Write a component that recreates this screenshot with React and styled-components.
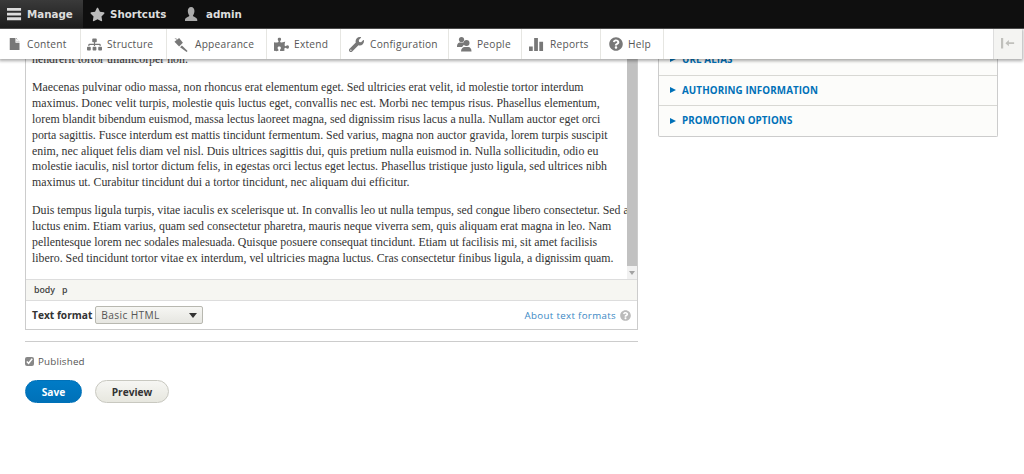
import React from "react";
import styled, { createGlobalStyle } from "styled-components";
import { FaStar, FaSitemap, FaPuzzlePiece, FaWrench, FaQuestionCircle } from "react-icons/fa";

const Global = createGlobalStyle`
  html, body { margin: 0; padding: 0; background: #fff; }
  body { font-family: "Open Sans", "Liberation Sans", sans-serif; }
  * { box-sizing: border-box; }
`;

const Root = styled.div`
  width: 1024px;
  height: 474px;
  overflow: hidden;
  display: flex;
  flex-direction: column;
`;
const Header = styled.header`
  position: relative;
  z-index: 10;
  flex: none;
`;
const TopBar = styled.div`
  height: 29px;
  background: #0f0f0f;
  display: flex;
  border-bottom: 1px solid #555;
`;
const TopTab = styled.div`
  display: flex;
  align-items: center;
  gap: ${(p) => p.$gap}px;
  width: ${(p) => p.$w}px;
  padding-left: ${(p) => p.$pl}px;
  color: #ddd;
  font: 700 10.3px "DejaVu Sans", sans-serif;
  background: ${(p) => (p.$active ? "linear-gradient(#3a3a3a, #1c1c1c)" : "transparent")};
`;
const Tray = styled.nav`
  height: 30px;
  margin-right: 2px;
  background: #fff;
  display: flex;
  box-shadow: 0 1px 3px 1px rgba(0, 0, 0, 0.33);
`;
const TrayItem = styled.div`
  width: ${(p) => p.$w}px;
  flex: none;
  display: flex;
  align-items: center;
  gap: ${(p) => p.$gap}px;
  padding-left: ${(p) => p.$pl}px;
  color: #565656;
  font-size: 10.2px;
  letter-spacing: 0.22px;
  border-right: 1px solid #e6e6e2;
  svg { flex: none; color: #787878; }
`;
const TraySpacer = styled.div`
  flex: 1;
`;
const Toggle = styled.div`
  width: 29px;
  flex: none;
  background: #f4f4f2;
  border-left: 1px solid #ddd;
  display: flex;
  align-items: center;
  justify-content: center;
`;

const Page = styled.main`
  flex: 1;
  min-height: 0;
  margin-top: -15px;
  padding-left: 25px;
  display: grid;
  grid-template-columns: 613px 340px;
  column-gap: 20px;
  align-items: start;
`;
const Column = styled.div`
  display: flex;
  flex-direction: column;
`;
const Editor = styled.div`
  border: 1px solid #ccc;
  border-top: 0;
`;
const EditArea = styled.div`
  height: 236px;
  display: flex;
  overflow: hidden;
  border-bottom: 1px solid #ddd;
`;
const Body = styled.div`
  flex: 1;
  min-width: 0;
  padding: 0 0 0 6px;
  color: #333;
  font-family: "Liberation Serif", serif;
  font-size: 11.85px;
  line-height: 15.9px;
  white-space: nowrap;
`;
const Para = styled.p`
  margin: ${(p) => p.$top || 0}px 0 12px;
`;
const Scrollbar = styled.div`
  width: 10px;
  flex: none;
  display: flex;
  flex-direction: column;
  background: #f1f1f1;
`;
const Thumb = styled.div`
  flex: 1;
  background: #c1c1c1;
`;
const ArrowCell = styled.div`
  height: 13px;
  display: flex;
  align-items: center;
  justify-content: center;
  color: #a3a3a3;
  &::after {
    content: "";
    border: 3px solid transparent;
    border-top: 4px solid currentColor;
    border-bottom: 0;
  }
`;
const StatusBar = styled.div`
  height: 21px;
  background: #f6f6f2;
  border-bottom: 1px solid #ddd;
  padding-left: 8px;
  display: flex;
  align-items: center;
  gap: 7px;
  color: #444;
  font-size: 8.8px;
  font-weight: 600;
`;
const FormatRow = styled.div`
  height: 28px;
  padding: 0 6px;
  display: flex;
  align-items: center;
  color: #333;
  font-size: 10.2px;
`;
const FormatLabel = styled.span`
  font-weight: 700;
  margin-right: 3px;
`;
const Select = styled.div`
  width: 108px;
  height: 18px;
  border: 1px solid #b8b8b0;
  border-radius: 2px;
  background: linear-gradient(#f6f6f3, #e6e6e1);
  display: flex;
  align-items: center;
  justify-content: space-between;
  padding: 0 5px;
  color: #555;
  letter-spacing: 0.35px;
  &::after {
    content: "";
    border: 4px solid transparent;
    border-top: 5px solid #333;
    border-bottom: 0;
  }
`;
const AboutLink = styled.div`
  margin-left: auto;
  display: flex;
  align-items: center;
  gap: 4px;
  color: #3a87c4;
  font-size: 9.7px;
  letter-spacing: 0.35px;
  svg { color: #bbb; }
`;
const Rule = styled.hr`
  margin: 11px 0 0;
  border: 0;
  border-top: 1px solid #ccc;
`;
const Check = styled.label`
  margin-top: 12px;
  display: flex;
  align-items: center;
  gap: 4px;
  height: 14px;
  color: #555;
  font-size: 9.8px;
  letter-spacing: 0.2px;
  input { margin: 0; width: 9px; height: 9px; accent-color: #888; }
`;
const Actions = styled.div`
  margin-top: 12px;
  display: flex;
  gap: 13px;
`;
const Button = styled.div`
  height: 23px;
  border-radius: 12px;
  width: ${(p) => p.$w}px;
  display: flex;
  align-items: center;
  justify-content: center;
  font-size: 10.2px;
  font-weight: 700;
  color: ${(p) => (p.$primary ? "#fff" : "#333")};
  background: ${(p) => (p.$primary ? "linear-gradient(#007bc6, #0071b8)" : "linear-gradient(#f6f6f3, #e7e7df)")};
  border: 1px solid ${(p) => (p.$primary ? "#0071b8" : "#c8c8c0")};
`;
const Panel = styled.aside`
  border: 1px solid #ccc;
  border-top: 0;
  border-radius: 0 0 2px 2px;
  background: #fcfcfa;
`;
const PanelRow = styled.div`
  height: 30.5px;
  padding-left: 11px;
  display: flex;
  align-items: center;
  gap: 6px;
  color: #0071b8;
  font-size: 9.8px;
  font-weight: 700;
  letter-spacing: 0.1px;
  text-transform: uppercase;
  & + & { border-top: 1px solid #d8d8d4; }
  &::before {
    content: "";
    border: 3px solid transparent;
    border-left: 6px solid #0071b8;
    border-right: 0;
  }
`;

const Ico = ({ children, w = 16, h = 16 }) => (
  <svg width={w} height={h} viewBox="0 0 16 16" fill="currentColor">{children}</svg>
);

const menu = [
  { t: "Content", w: 81, pl: 9, gap: 6, i: <Ico w={12} h={14}><path d="M1 0h8l5 5v11H1zM9.5 0v5H14z" /><path d="M9 0v6h6" fill="none" stroke="#fff" strokeWidth="1" /></Ico> },
  { t: "Structure", w: 86, pl: 6, gap: 5, i: <FaSitemap size={15} /> },
  { t: "Appearance", w: 100, pl: 6, gap: 6, i: <Ico w={16} h={15}><path d="M1 5l5-4 4 5-4 4z" /><path d="M7 11l2-2 6 6-1 1z" /><path d="M3 3L1 1l3 1z" /></Ico> },
  { t: "Extend", w: 74, pl: 7, gap: 5, i: <FaPuzzlePiece size={15} /> },
  { t: "Configuration", w: 108, pl: 8, gap: 6, i: <FaWrench size={15} /> },
  { t: "People", w: 73, pl: 7, gap: 5, i: <Ico w={16} h={16}><circle cx="5.5" cy="3.5" r="2.6" /><path d="M1 10c0-2.500 2-3.500 2.500-3.500h4c1 0 1.500 1 1.500 1L6 11H1z" /><circle cx="10.500" cy="7" r="3" /><path d="M5 15.500c0-3 2-4.500 3.500-4.500h4c1.500 0 3 1.500 3 4.500z" /></Ico> },
  { t: "Reports", w: 79, pl: 7, gap: 6, i: <Ico w={15} h={15}><path d="M0 10h4v5H0zM5.500 1h4v14h-4zM11 5h4v10h-4z" /></Ico> },
  { t: "Help", w: 63, pl: 8, gap: 5, i: <FaQuestionCircle size={14} /> },
];

const para1 = [
  "Maecenas pulvinar odio massa, non rhoncus erat elementum eget. Sed ultricies erat velit, id molestie tortor interdum",
  "maximus. Donec velit turpis, molestie quis luctus eget, convallis nec est. Morbi nec tempus risus. Phasellus elementum,",
  "lorem blandit bibendum euismod, massa lectus laoreet magna, sed dignissim risus lacus a nulla. Nullam auctor eget orci",
  "porta sagittis. Fusce interdum est mattis tincidunt fermentum. Sed varius, magna non auctor gravida, lorem turpis suscipit",
  "enim, nec aliquet felis diam vel nisl. Duis ultrices sagittis dui, quis pretium nulla euismod in. Nulla sollicitudin, odio eu",
  "molestie iaculis, nisl tortor dictum felis, in egestas orci lectus eget lectus. Phasellus tristique justo ligula, sed ultrices nibh",
  "maximus ut. Curabitur tincidunt dui a tortor tincidunt, nec aliquam dui efficitur.",
];
const para2 = [
  "Duis tempus ligula turpis, vitae iaculis ex scelerisque ut. In convallis leo ut nulla tempus, sed congue libero consectetur. Sed a",
  "luctus enim. Etiam varius, quam sed consectetur pharetra, mauris neque viverra sem, quis aliquam erat magna in leo. Nam",
  "pellentesque lorem nec sodales malesuada. Quisque posuere consequat tincidunt. Etiam ut facilisis mi, sit amet facilisis",
  "libero. Sed tincidunt tortor vitae ex interdum, vel ultricies magna luctus. Cras consectetur finibus ligula, a dignissim quam.",
];
const lines = (arr) => arr.map((l, i) => <React.Fragment key={i}>{l}{i < arr.length - 1 && <br />}</React.Fragment>);

export default function App() {
  return (
    <Root>
      <Global />
      <Header>
        <TopBar>
          <TopTab $w={83} $pl={7} $gap={5} $active>
            <Ico w={15} h={15}><path d="M0 1h15v3H0zM0 6h15v3H0zM0 11h15v3H0z" fill="#ddd" /></Ico>
            Manage
          </TopTab>
          <TopTab $w={102} $pl={7} $gap={5}><FaStar size={15} color="#bbb" />Shortcuts</TopTab>
          <TopTab $w={100} $pl={0} $gap={7}>
            <Ico w={14} h={16}><path d="M7 0c2.500 0 3.800 2 3.800 4.500S9.500 9 9 10c0 1 5 2 5 4.500V16H0v-1.500C0 12 5 11 5 10c-.5-1-1.800-3-1.800-5.500S4.500 0 7 0z" fill="#aaa" /></Ico>
            admin
          </TopTab>
        </TopBar>
        <Tray>
          {menu.map((m) => (
            <TrayItem key={m.t} $w={m.w} $pl={m.pl} $gap={m.gap}>{m.i}{m.t}</TrayItem>
          ))}
          <TraySpacer />
          <Toggle>
            <Ico w={16} h={14}><path d="M0 1h2.500v12H0zM5 7l4-3.500V6h6v2H9v2.500z" fill="#c0c0bc" /></Ico>
          </Toggle>
        </Tray>
      </Header>
      <Page>
        <Column>
          <Editor>
            <EditArea>
              <Body>
                <Para $top={8}>hendrerit tortor ullamcorper non.</Para>
                <Para>{lines(para1)}</Para>
                <Para>{lines(para2)}</Para>
              </Body>
              <Scrollbar><Thumb /><ArrowCell /></Scrollbar>
            </EditArea>
            <StatusBar><span>body</span><span>p</span></StatusBar>
            <FormatRow>
              <FormatLabel>Text format</FormatLabel>
              <Select>Basic HTML</Select>
              <AboutLink>About text formats <FaQuestionCircle size={11} /></AboutLink>
            </FormatRow>
          </Editor>
          <Rule />
          <Check><input type="checkbox" defaultChecked readOnly /> Published</Check>
          <Actions>
            <Button $primary $w={57}>Save</Button>
            <Button $w={74}>Preview</Button>
          </Actions>
        </Column>
        <Panel>
          <PanelRow>URL alias</PanelRow>
          <PanelRow>Authoring information</PanelRow>
          <PanelRow>Promotion options</PanelRow>
        </Panel>
      </Page>
    </Root>
  );
}
